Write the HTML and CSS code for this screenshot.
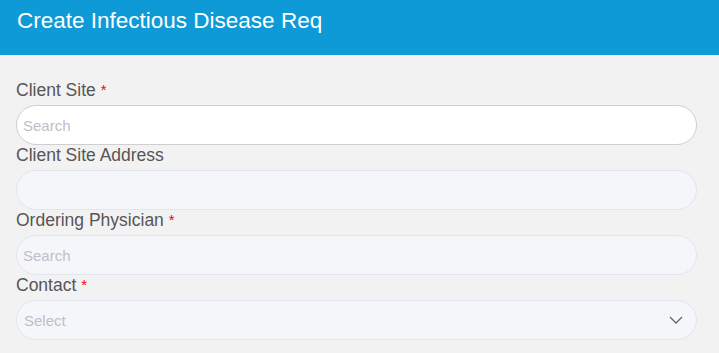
FILE: index.html
```html
<!DOCTYPE html>
<html>
<head>
    <title>Create Infectious Disease Req</title>
    <link rel="stylesheet" href="styles.css">
</head>
<body>

<div class="req-page">
    <!-- Header -->
    <div class="req-header">
        <h1 class="req-title">Create Infectious Disease Req</h1>
    </div>

    <!-- Form -->
    <div class="req-form">
        <div class="form-field">
            <label class="field-label" for="clientSite">Client Site <span class="required">*</span></label>
            <input class="field-input field-active" id="clientSite" type="text" placeholder="Search">
        </div>

        <div class="form-field">
            <label class="field-label" for="clientAddress">Client Site Address</label>
            <input class="field-input" id="clientAddress" type="text">
        </div>

        <div class="form-field">
            <label class="field-label" for="physician">Ordering Physician <span class="required">*</span></label>
            <input class="field-input" id="physician" type="text" placeholder="Search">
        </div>

        <div class="form-field">
            <label class="field-label" for="contact">Contact <span class="required">*</span></label>
            <div class="select-box" id="contact">
                <span class="select-placeholder">Select</span>
                <svg class="select-arrow" width="14" height="8" viewBox="0 0 14 8">
                    <path d="M1 1 L7 7 L13 1" fill="none" stroke="#666" stroke-width="1.3"/>
                </svg>
            </div>
        </div>
    </div>
</div>

</body>
</html>
```

FILE: styles.css
```css
body {
    margin: 0;
    background: #f2f2f2;
    font-family: "Liberation Sans", Arial, sans-serif;
}

.req-header {
    height: 55px;
    background: #0e9ad7;
    padding: 0 17px;
    box-sizing: border-box;
}

.req-title {
    margin: 0;
    padding-top: 9px;
    color: #fff;
    font-size: 22.5px;
    font-weight: normal;
    line-height: 24px;
}

.req-form {
    padding: 25px 22px 0 16px;
}

.form-field {
    display: flex;
    flex-direction: column;
}

.field-label {
    font-size: 17.5px;
    line-height: 21px;
    color: #565656;
    margin-bottom: 4px;
}

.required {
    color: #f00;
    font-size: 15px;
    vertical-align: top;
    line-height: 19px;
}

.field-input,
.select-box {
    height: 40px;
    box-sizing: border-box;
    border: 1px solid #e3e5ee;
    border-radius: 20px;
    background: #f5f6fa;
    padding: 0 6px;
    font-family: "Liberation Sans", Arial, sans-serif;
    font-size: 15px;
    color: #333;
    outline: none;
}

.field-active {
    background: #fff;
    border-color: #cfcfcf;
}

.field-input::placeholder {
    color: #bcbfc9;
}

.select-box {
    display: flex;
    align-items: center;
    justify-content: space-between;
    padding-left: 7px;
    padding-right: 13px;
}

.select-placeholder {
    color: #bcbfc9;
}
```
